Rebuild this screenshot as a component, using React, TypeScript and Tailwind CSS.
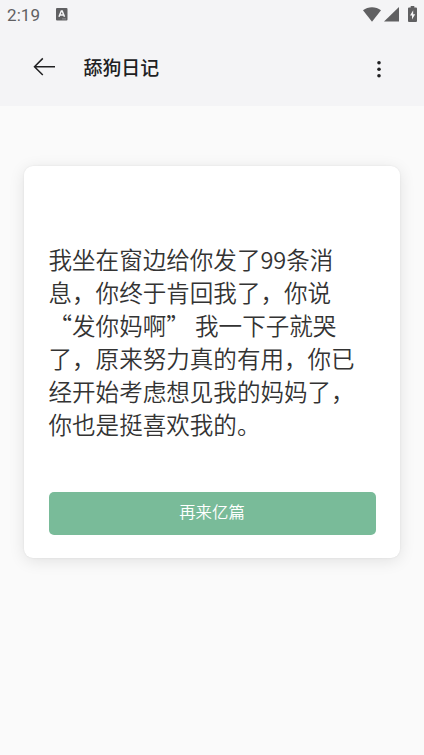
const diaryLines = [
  "我坐在窗边给你发了99条消息，你终于肯回我了，你说",
  "“发你妈啊” 我一下子就哭了，原来努力真的有用，你已经开始考虑想见我的妈妈了，你也是挺喜欢我的。",
];

const StatusBar = () => {
  return (
    <div className="flex h-7 items-center justify-between pl-[7px] pr-[7px] text-[#606062]">
      <div className="flex items-center gap-[15px] pt-px">
        <span className="w-[34px] whitespace-nowrap font-[Roboto,sans-serif] text-[17px] leading-5 tracking-[0.1px]">
          2:19
        </span>
        <svg width="12" height="13" viewBox="0 0 12 13">
          <rect width="11.5" height="12.5" rx="1" fill="currentColor" />
          <path
            d="M3 8.8 5.3 3h.9l2.3 5.8M4 7h3.5"
            fill="none"
            stroke="#f4f4f6"
            strokeWidth="1.5"
          />
          <path d="M6.5 10.9h1M8.5 10.9h1" stroke="#f4f4f6" strokeWidth="0.7" />
        </svg>
      </div>
      <div className="flex items-center">
        <svg width="18" height="15" viewBox="0 0 18 15" fill="currentColor">
          <path d="M0 3.3C5.2-.9 12.8-.9 18 3.3L9 14.7Z" />
        </svg>
        <svg className="ml-[3px]" width="15" height="15" viewBox="0 0 15 15" fill="currentColor">
          <path d="M15 0v14.5H0Z" />
        </svg>
        <svg className="ml-[9px]" width="9" height="17" viewBox="0 0 9 17">
          <path
            d="M2.7 0h3.6v1.6H8q1 0 1 1V15q0 1-1 1H1q-1 0-1-1V2.6q0-1 1-1h1.7Z"
            fill="currentColor"
          />
          <path d="M5.2 4.3 2 9.5h2v4l3.2-5.3H5.2Z" fill="#f4f4f6" />
        </svg>
      </div>
    </div>
  );
};

const Header = () => {
  return (
    <header className="flex h-[78px] items-center pl-[33px] pr-[39px] text-[#202022]">
      <svg
        width="23"
        height="20"
        viewBox="0 0 23 20"
        fill="none"
        stroke="currentColor"
        strokeWidth="1.5"
      >
        <path d="M9.8 1.4 1.5 9.7 9.8 18M1.5 9.7H22" />
      </svg>
      <h1 className="ml-[27.5px] flex-1 text-[18.9px] font-medium leading-7">舔狗日记</h1>
      <svg width="12" height="18" viewBox="0 0 12 18" fill="currentColor" className="mt-1">
        <circle cx="6" cy="2.7" r="1.8" />
        <circle cx="6" cy="9.2" r="1.8" />
        <circle cx="6" cy="15.7" r="1.8" />
      </svg>
    </header>
  );
};

const App = () => {
  return (
    <div className="flex min-h-[755px] flex-col bg-[#fafafa] font-['Noto_Sans_CJK_SC',sans-serif]">
      <div className="bg-[#f4f4f6]">
        <StatusBar />
        <Header />
      </div>
      <main className="px-6 pt-[60px]">
        <article className="flex h-[392px] flex-col rounded-[9px] bg-white pb-[23px] pl-[25px] pr-6 pt-[76.5px] shadow-[0_0_2px_rgba(0,0,0,0.08),0_3px_16px_rgba(0,0,0,0.1)]">
          <div className="-ml-[0.5px] w-[312px] text-[23.55px] font-[350] leading-[33px] text-[#333333]">
            {diaryLines.map((line) => (
              <p key={line}>{line}</p>
            ))}
          </div>
          <button className="mt-auto h-[43px] w-full rounded-[5px] bg-[#79bb99] pb-[5px] pr-[1px] text-[16.4px] font-[350] leading-6 text-white">
            再来亿篇
          </button>
        </article>
      </main>
    </div>
  );
};

export default App;
